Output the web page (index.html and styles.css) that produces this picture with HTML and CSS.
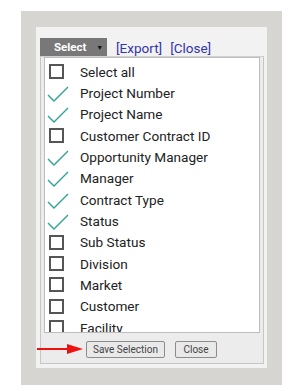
FILE: index.html
```html
<!DOCTYPE html>
<html lang="en">
<head>
  <meta charset="UTF-8" />
  <title>Column Selection</title>
  <link rel="stylesheet" href="styles.css">
</head>
<body>
  <div class="frame">
    <div class="panel">
      <div class="toolbar">
        <button class="select-btn">Select <span class="caret">&#9660;</span></button>
        <a class="link" href="#">[Export]</a>
        <a class="link" href="#">[Close]</a>
      </div>

      <div class="dialog">
        <ul class="columns">
          <li><span class="box"></span>Select all</li>
          <li class="on"><span class="tick"><svg viewBox="0 0 22 16" width="22" height="16"><path d="M1 9 L7 15 L21 1" /></svg></span>Project Number</li>
          <li class="on"><span class="tick"><svg viewBox="0 0 22 16" width="22" height="16"><path d="M1 9 L7 15 L21 1" /></svg></span>Project Name</li>
          <li><span class="box"></span>Customer Contract ID</li>
          <li class="on"><span class="tick"><svg viewBox="0 0 22 16" width="22" height="16"><path d="M1 9 L7 15 L21 1" /></svg></span>Opportunity Manager</li>
          <li class="on"><span class="tick"><svg viewBox="0 0 22 16" width="22" height="16"><path d="M1 9 L7 15 L21 1" /></svg></span>Manager</li>
          <li class="on"><span class="tick"><svg viewBox="0 0 22 16" width="22" height="16"><path d="M1 9 L7 15 L21 1" /></svg></span>Contract Type</li>
          <li class="on"><span class="tick"><svg viewBox="0 0 22 16" width="22" height="16"><path d="M1 9 L7 15 L21 1" /></svg></span>Status</li>
          <li><span class="box"></span>Sub Status</li>
          <li><span class="box"></span>Division</li>
          <li><span class="box"></span>Market</li>
          <li><span class="box"></span>Customer</li>
          <li><span class="box"></span>Facility</li>
        </ul>

        <div class="footer">
          <button class="btn btn-save">Save Selection</button>
          <button class="btn btn-close">Close</button>
        </div>

        <!-- annotation arrow pointing at the save button -->
        <svg class="arrow" viewBox="0 0 46 12" width="46" height="12">
          <line x1="0" y1="6" x2="32" y2="6" />
          <polygon points="30,1 46,6 30,11" />
        </svg>
      </div>
    </div>
  </div>
</body>
</html>
```

FILE: styles.css
```css
* {
  box-sizing: border-box;
}

body {
  margin: 0;
  background: #ffffff;
  font-family: Roboto, "Liberation Sans", sans-serif;
}

.frame {
  margin: 11px 0 0 21px;
  width: 261px;
  height: 374px;
  background: #d6d5d1;
  padding: 16px 15px 0 15px;
}

.panel {
  background: #f2f2f2;
  height: 341px;
  padding: 11px 3px 0 4px;
}

.toolbar {
  display: flex;
  align-items: center;
  height: 18px;
}

.select-btn {
  width: 67px;
  height: 18px;
  padding: 0 0 0 14px;
  border: none;
  background: #787878;
  color: #ffffff;
  font-family: Roboto, "Liberation Sans", sans-serif;
  font-weight: 700;
  font-size: 11.5px;
  text-align: left;
  white-space: nowrap;
}

.caret {
  font-size: 7px;
  margin-left: 7px;
  color: #111;
  position: relative;
  top: -1px;
}

.link {
  color: #3535a8;
  text-decoration: none;
  font-size: 13.5px;
  margin-left: 9px;
  position: relative;
  top: 1px;
}

.link + .link {
  margin-left: 8px;
}

.dialog {
  position: relative;
  width: 224px;
  border: 1px solid #c6c6c6;
  border-top-color: #d0d0d0;
  background: #ececec;
  padding: 0 3px;
}

.columns {
  list-style: none;
  margin: 0;
  height: 276px;
  overflow: hidden;
  background: #ffffff;
  border: 1px solid #bdbdbd;
  padding: 3px 0 0 2px;
}

.columns li {
  display: flex;
  align-items: center;
  height: 21.33px;
  font-size: 13.6px;
  color: #222222;
}

.box {
  width: 15px;
  height: 15px;
  border: 2px solid #555555;
  margin: 0 16px 0 2px;
  flex: none;
}

.tick {
  width: 33px;
  flex: none;
  display: flex;
  align-items: center;
}

.tick svg {
  fill: none;
  stroke: #2aa395;
  stroke-width: 1.4;
  position: relative;
  top: 1px;
}

.footer {
  display: flex;
  gap: 10px;
  padding: 8px 0 5px 42px;
}

.btn {
  height: 17px;
  padding: 0;
  background: #e9e9e9;
  border: 1px solid #8c8c8c;
  border-radius: 2px;
  font-family: Roboto, "Liberation Sans", sans-serif;
  font-size: 10px;
  color: #444444;
  white-space: nowrap;
}

.btn-save {
  width: 79px;
}

.btn-close {
  width: 42px;
}

.arrow {
  position: absolute;
  left: -4px;
  bottom: 8px;
}

.arrow line {
  stroke: #ee1111;
  stroke-width: 2;
}

.arrow polygon {
  fill: #ee1111;
}
```
